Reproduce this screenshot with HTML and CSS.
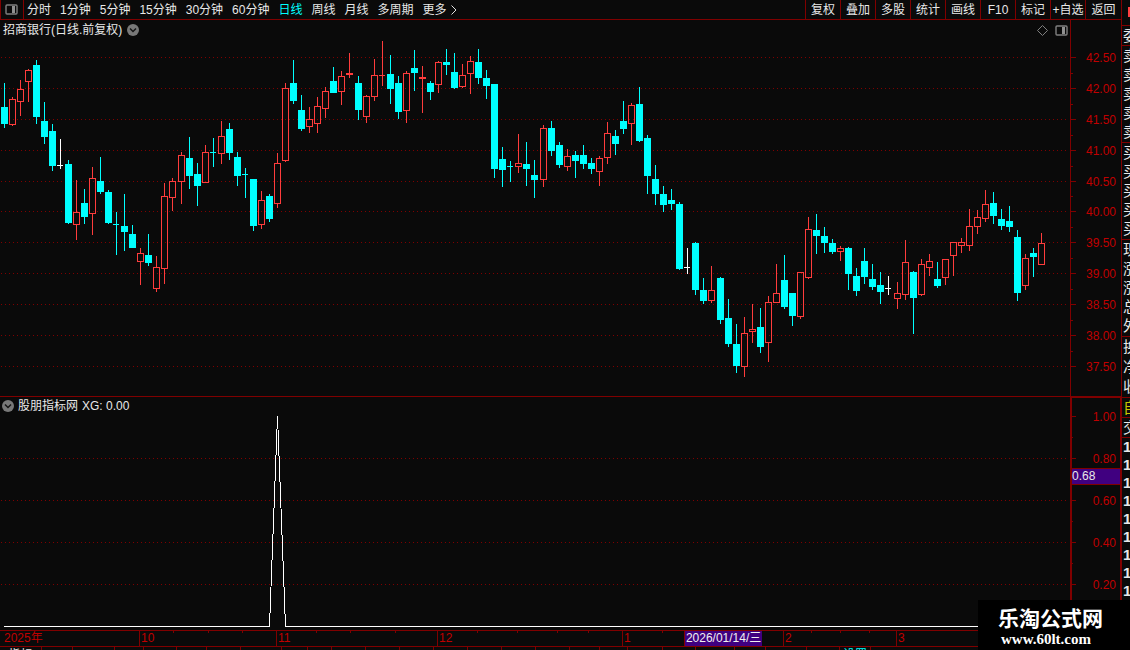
FILE: index.html
```html
<!DOCTYPE html>
<html lang="zh-CN">
<head>
    <meta charset="UTF-8">
    <meta name="viewport" content="width=device-width, initial-scale=1.0">
    <title>招商银行 日线</title>
    <link rel="stylesheet" href="styles.css">
</head>
<body>
    <div class="terminal">
        <main class="main">
            <header class="toolbar">
                <button class="layout-button" aria-label="布局">
                    <svg width="13" height="11" viewBox="0 0 13 11"><rect x="1" y="1" width="11" height="9" rx="1" fill="none" stroke="#808080" stroke-width="1.4"/><rect x="7" y="2" width="3" height="7" fill="#909090"/></svg>
                </button>
                <nav class="periods">
                    <button>分时</button>
                    <button>1分钟</button>
                    <button>5分钟</button>
                    <button>15分钟</button>
                    <button>30分钟</button>
                    <button>60分钟</button>
                    <button class="active">日线</button>
                    <button>周线</button>
                    <button>月线</button>
                    <button>多周期</button>
                    <button class="more">更多<svg width="6" height="10" viewBox="0 0 6 10"><path d="M0.5 0.5L5 5L0.5 9.5" fill="none" stroke="#e0e0e0"/></svg></button>
                </nav>
                <div class="tools">
                    <button>复权</button>
                    <button>叠加</button>
                    <button>多股</button>
                    <button>统计</button>
                    <button>画线</button>
                    <button>F10</button>
                    <button>标记</button>
                    <button>+自选</button>
                    <button class="back">返回</button>
                </div>
            </header>

            <section class="panel">
                <div class="plot">
                    <div class="panel-title">
                        <span>招商银行(日线.前复权)</span>
                        <svg width="12" height="12" viewBox="0 0 12 12"><circle cx="6" cy="6" r="6" fill="#787878"/><path d="M3 4.5L6 7.5L9 4.5" fill="none" stroke="#151515" stroke-width="1.5"/></svg>
                        <div class="panel-icons">
                            <svg width="11" height="11" viewBox="0 0 11 11"><path d="M5.5 0.5L10.5 5.5L5.5 10.5L0.5 5.5Z" fill="none" stroke="#808080"/></svg>
                            <svg width="13" height="11" viewBox="0 0 13 11"><rect x="1" y="1" width="11" height="9" rx="1" fill="none" stroke="#808080" stroke-width="1.4"/><rect x="7" y="2" width="3" height="7" fill="#909090"/></svg>
                        </div>
                    </div>
                    <svg id="kline" class="kline" viewBox="0 40 1070 356" preserveAspectRatio="none"></svg>
                </div>
                <svg id="price-axis" class="axis" width="50" height="376" viewBox="1071 20 50 376"></svg>
            </section>

            <section class="panel indicator">
                <div class="plot">
                    <div class="panel-title">
                        <svg width="12" height="12" viewBox="0 0 12 12"><circle cx="6" cy="6" r="6" fill="#787878"/><path d="M3 4.5L6 7.5L9 4.5" fill="none" stroke="#151515" stroke-width="1.5"/></svg>
                        <span>股朋指标网</span>
                        <span>XG: 0.00</span>
                    </div>
                    <svg id="signal" class="signal" viewBox="0 414 1070 216" preserveAspectRatio="none"></svg>
                </div>
                <div class="axis-frame">
                    <svg id="signal-axis" class="axis" width="48" height="232" viewBox="1072 398 48 232"></svg>
                    <div class="cursor-value">0.68</div>
                </div>
            </section>

            <div class="dates">
                <span>2025年</span>
                <span>10</span>
                <span>11</span>
                <span>12</span>
                <span>1</span>
                <span>2</span>
                <span>3</span>
                <svg id="date-ticks" class="date-ticks" viewBox="0 631 1121 15" preserveAspectRatio="none"></svg>
                <div class="cursor-date">2026/01/14/三</div>
            </div>
            <div id="tabs" class="tabs"></div>
        </main>

        <aside class="quote">
            <div class="quote-head"></div>
            <div class="group one"><b>委</b></div>
            <div class="group five"><b>卖</b><b>卖</b><b>卖</b><b>卖</b><b>卖</b></div>
            <div class="group five"><b>买</b><b>买</b><b>买</b><b>买</b><b>买</b></div>
            <div class="group five"><b>现</b><b>涨</b><b>涨</b><b>总</b><b>外</b></div>
            <div class="group three"><b>换</b><b>净</b><b>收</b></div>
            <div class="group one own"><b>自</b></div>
            <div class="group one"><b>交</b></div>
            <div class="group ticks"><b>1</b><b>1</b><b>1</b><b>1</b><b>1</b><b>1</b><b>1</b><b>1</b><b>1</b></div>
        </aside>
    </div>

    <div class="site-mark">
        <strong>乐淘公式网</strong>
        <span>www.60lt.com</span>
    </div>

    <script src="script.js"></script>
</body>
</html>
```
FILE: styles.css
```css
body {
    margin: 0;
    background-color: #0a0a0a;
    color: #e8e8e8;
    font-family: "Liberation Sans", "Noto Sans CJK SC", sans-serif;
    font-size: 12px;
    line-height: 16px;
    overflow: hidden;
}
svg {
    display: block;
    flex-shrink: 0;
}
button {
    padding: 0;
    border: 0;
    background: none;
    color: inherit;
    font: inherit;
    white-space: nowrap;
    cursor: pointer;
}
.terminal {
    display: flex;
    height: 100vh;
}
.main {
    flex: 1;
    min-width: 0;
    display: flex;
    flex-direction: column;
}

/* 顶部工具栏 */
.toolbar {
    display: flex;
    height: 19px;
    border-bottom: 1px solid #800000;
}
.layout-button {
    width: 24px;
    padding-left: 4px;
    border-left: 1px solid #800000;
    border-right: 1px solid #800000;
    box-sizing: border-box;
}
.periods {
    display: flex;
    gap: 9px;
    padding-left: 3px;
}
.periods .active {
    color: #00ffff;
}
.more {
    display: flex;
    align-items: center;
    gap: 4px;
}
.tools {
    display: flex;
    margin-left: auto;
}
.tools button {
    width: 35px;
    border-left: 1px solid #800000;
    box-sizing: border-box;
}
.tools .back {
    width: 36px;
}

/* 图表 */
.panel {
    display: flex;
}
.plot {
    flex: 1;
    min-width: 0;
    border-right: 1px solid #800000;
}
.panel-title {
    display: flex;
    align-items: center;
    gap: 5px;
    height: 20px;
    padding: 0 2px 0 3px;
}
.panel-icons {
    display: flex;
    gap: 7px;
    margin-left: auto;
}
.kline {
    width: 100%;
    height: 356px;
}
.indicator {
    border-top: 1px solid #800000;
}
.indicator .plot {
    border-right-width: 2px;
}
.indicator .panel-title {
    gap: 4px;
    height: 17px;
    padding: 0 2px;
}
.signal {
    width: 100%;
    height: 216px;
}
.signal polyline {
    shape-rendering: crispEdges;
}
.axis-frame {
    position: relative;
    border-top: 1px solid #800000;
    border-right: 1px solid #800000;
}
.axis text {
    fill: #c00000;
    text-anchor: end;
}
.cursor-value {
    position: absolute;
    top: 70px;
    left: 0;
    right: 0;
    height: 15px;
    line-height: 15px;
    border-top: 1px solid #800000;
    border-bottom: 1px solid #800000;
    background-color: #400080;
}

/* 日期轴 */
.dates {
    position: relative;
    display: grid;
    grid-template-columns: 139fr 137fr 161fr 185fr 161fr 113fr 225fr;
    height: 15px;
    line-height: 15px;
    border-top: 1px solid #800000;
    color: #c00000;
}
.dates span {
    padding-left: 1px;
    border-left: 1px solid #800000;
}
.dates span:first-child {
    padding-left: 4px;
    border-left: 0;
}
.date-ticks {
    position: absolute;
    width: 100%;
    height: 15px;
}
.cursor-date {
    position: absolute;
    right: 32%;
    height: 15px;
    padding: 0 1px;
    border-left: 1px solid #800000;
    background-color: #400080;
    color: #f0f0f0;
}
.tabs {
    display: flex;
    flex: 1;
    min-height: 0;
    overflow: hidden;
    border-top: 1px solid #800000;
}
.tabs button {
    flex-shrink: 0;
    height: 16px;
    border-right: 1px solid #800000;
    box-sizing: border-box;
}
.tabs .active {
    color: #00ffff;
}

/* 右侧报价栏 */
.quote {
    width: 8px;
    overflow: hidden;
    border-left: 1px solid #800000;
}
.quote-head {
    width: 2px;
    height: 10px;
    margin: 7px 0 8px 6px;
    background-color: #ff4040;
}
.group {
    display: flex;
    flex-direction: column;
    justify-content: space-around;
    padding-left: 1px;
    border-top: 1px solid #800000;
    font-size: 15px;
}
.group b {
    font-weight: normal;
}
.one {
    height: 19px;
}
.five {
    height: 96px;
}
.three {
    height: 60px;
}
.own {
    color: #c8c800;
}
.ticks {
    height: 162px;
}
.ticks b {
    font-weight: bold;
}

.site-mark {
    position: fixed;
    right: 0;
    bottom: 0;
    display: flex;
    flex-direction: column;
    width: 132px;
    height: 43px;
    padding: 7px 0 0 20px;
    background-color: #000;
    color: #fff;
}
.site-mark strong {
    font-size: 21px;
    line-height: 24px;
}
.site-mark span {
    padding-left: 3px;
    font-family: "Liberation Serif", serif;
    font-size: 15px;
    font-weight: bold;
}
```
FILE: script.js
```js
// x, 最高, 实体上沿, 实体下沿, 最低, 类型 (d 跌, u 涨, w 平)
const candles = [
    [4, 83, 107, 124, 128, 'd'], [12, 97, 99, 125, 126, 'u'], [20, 80, 89, 102, 116, 'u'],
    [28, 69, 70, 82, 102, 'u'], [36, 60, 65, 117, 124, 'd'], [44, 102, 121, 137, 144, 'd'],
    [52, 124, 131, 166, 171, 'd'], [60, 139, 165, 166, 169, 'w'], [68, 160, 164, 223, 224, 'd'],
    [76, 180, 212, 225, 240, 'u'], [84, 189, 203, 217, 224, 'd'], [92, 167, 178, 214, 235, 'u'],
    [100, 157, 181, 192, 194, 'd'], [108, 190, 192, 223, 224, 'd'], [116, 212, 224, 225, 255, 'd'],
    [124, 194, 226, 232, 251, 'd'], [132, 225, 234, 248, 248, 'd'], [140, 248, 253, 262, 285, 'u'],
    [148, 234, 255, 263, 266, 'd'], [156, 256, 267, 289, 292, 'u'], [164, 183, 196, 269, 284, 'u'],
    [172, 178, 181, 198, 211, 'u'], [181, 152, 155, 182, 204, 'u'], [189, 137, 158, 176, 189, 'd'],
    [197, 163, 174, 186, 206, 'd'], [205, 145, 152, 183, 183, 'u'], [213, 138, 152, 153, 167, 'd'],
    [221, 121, 136, 154, 164, 'u'], [229, 123, 129, 153, 160, 'd'], [237, 152, 157, 176, 186, 'd'],
    [245, 168, 174, 175, 198, 'd'], [253, 179, 179, 226, 231, 'd'], [261, 191, 200, 225, 229, 'u'],
    [269, 194, 196, 219, 222, 'd'], [277, 153, 163, 204, 208, 'u'], [285, 83, 88, 161, 162, 'u'],
    [293, 60, 83, 101, 104, 'd'], [301, 95, 110, 129, 131, 'd'], [309, 107, 119, 127, 133, 'u'],
    [317, 97, 106, 124, 133, 'u'], [325, 87, 91, 109, 118, 'u'], [333, 67, 81, 93, 93, 'd'],
    [341, 71, 76, 92, 105, 'u'], [349, 53, 73, 75, 78, 'u'], [358, 76, 83, 110, 120, 'd'],
    [366, 95, 96, 117, 123, 'u'], [374, 59, 75, 97, 101, 'u'], [382, 41, 75, 76, 86, 'u'],
    [390, 55, 74, 89, 104, 'd'], [398, 76, 83, 112, 119, 'd'], [406, 71, 73, 111, 123, 'u'],
    [414, 50, 68, 73, 91, 'd'], [422, 66, 77, 79, 113, 'u'], [430, 81, 83, 92, 100, 'd'],
    [438, 61, 62, 85, 93, 'u'], [446, 49, 62, 65, 75, 'd'], [454, 53, 72, 88, 89, 'd'],
    [462, 64, 75, 87, 88, 'u'], [470, 56, 61, 74, 94, 'u'], [478, 49, 62, 78, 84, 'd'],
    [486, 70, 78, 86, 99, 'd'], [494, 84, 84, 169, 178, 'd'], [502, 147, 159, 170, 187, 'd'],
    [510, 161, 166, 167, 182, 'd'], [518, 134, 163, 167, 173, 'u'], [526, 142, 164, 169, 186, 'd'],
    [534, 160, 175, 180, 198, 'd'], [543, 125, 128, 180, 187, 'u'], [551, 121, 128, 151, 156, 'd'],
    [559, 142, 145, 165, 168, 'd'], [567, 149, 156, 167, 171, 'u'], [575, 151, 155, 161, 178, 'd'],
    [583, 145, 155, 164, 169, 'd'], [591, 158, 163, 169, 174, 'd'], [599, 156, 158, 172, 186, 'u'],
    [607, 122, 133, 158, 164, 'u'], [615, 130, 136, 144, 155, 'd'], [623, 101, 121, 129, 134, 'd'],
    [631, 103, 105, 124, 145, 'u'], [639, 87, 104, 141, 142, 'd'], [647, 135, 138, 176, 194, 'd'],
    [655, 165, 179, 194, 205, 'd'], [663, 186, 194, 205, 212, 'd'], [671, 189, 200, 204, 210, 'd'],
    [679, 202, 204, 269, 270, 'd'], [687, 248, 267, 268, 274, 'w'], [695, 242, 243, 290, 295, 'd'],
    [703, 278, 290, 301, 304, 'd'], [711, 266, 290, 301, 303, 'u'], [720, 277, 278, 320, 324, 'd'],
    [728, 299, 318, 344, 347, 'd'], [736, 324, 344, 366, 373, 'd'], [744, 317, 333, 367, 377, 'u'],
    [752, 304, 329, 332, 343, 'u'], [760, 308, 327, 347, 353, 'd'], [768, 296, 302, 343, 362, 'u'],
    [776, 264, 293, 303, 303, 'u'], [784, 255, 280, 307, 309, 'd'], [792, 293, 293, 316, 326, 'd'],
    [800, 272, 272, 317, 319, 'u'], [808, 217, 229, 278, 279, 'u'], [816, 214, 230, 236, 254, 'd'],
    [824, 227, 236, 243, 253, 'd'], [832, 239, 243, 252, 254, 'd'], [840, 246, 248, 252, 261, 'u'],
    [848, 247, 248, 274, 290, 'd'], [856, 268, 276, 291, 296, 'd'], [864, 248, 261, 277, 284, 'd'],
    [872, 264, 279, 287, 290, 'd'], [880, 272, 285, 292, 304, 'd'], [888, 276, 288, 289, 295, 'w'],
    [897, 282, 293, 299, 309, 'u'], [905, 240, 262, 295, 300, 'u'], [913, 271, 272, 298, 334, 'd'],
    [921, 259, 264, 295, 296, 'u'], [929, 254, 261, 268, 276, 'u'], [937, 262, 279, 286, 288, 'd'],
    [945, 259, 259, 278, 285, 'u'], [953, 242, 242, 256, 276, 'u'], [961, 238, 242, 246, 253, 'u'],
    [969, 209, 226, 246, 251, 'u'], [977, 210, 217, 227, 234, 'u'], [985, 190, 204, 219, 222, 'u'],
    [993, 192, 203, 216, 224, 'd'], [1001, 209, 219, 226, 230, 'd'], [1009, 206, 221, 227, 232, 'd'],
    [1017, 230, 237, 293, 301, 'd'], [1025, 254, 258, 286, 290, 'u'], [1033, 248, 253, 257, 277, 'd'],
    [1041, 233, 243, 265, 265, 'u']
];
const colors = { d: '#00ffff', u: '#ff3c3c', w: '#ffffff' };

const priceRows = [57, 88, 119, 150, 181, 211, 242, 273, 304, 335, 366];
const signalRows = [416, 458, 500, 542, 584];

function rect(x, y, w, h, fill) {
    return `<rect x="${x}" y="${y}" width="${w}" height="${h}" fill="${fill}"/>`;
}

function gridLine(y) {
    return `<line x1="1" x2="1068" y1="${y + 0.5}" y2="${y + 0.5}" stroke="#800000" stroke-dasharray="1 3"/>`;
}

function drawKline() {
    let out = priceRows.map(gridLine).join('');
    candles.forEach(([x, high, top, bottom, low, type]) => {
        const color = colors[type];
        out += rect(x, high, 1, top - high, color);
        out += rect(x, bottom, 1, low - bottom, color);
        if (bottom - top === 1) {
            out += rect(x - 3, top, 6, 1, color);
        } else if (type === 'u') {
            out += `<rect x="${x - 2.5}" y="${top + 0.5}" width="6" height="${bottom - top - 1}" fill="none" stroke="${color}"/>`;
        } else {
            out += rect(x - 3, top, 7, bottom - top, color);
        }
    });
    document.getElementById('kline').innerHTML = out;
}

function drawSignal() {
    document.getElementById('signal').innerHTML = signalRows.slice(1).map(gridLine).join('') +
        '<polyline points="4,626.5 269.5,626.5 277.5,416 285.5,626.5 1042,626.5" fill="none" stroke="#ffffff"/>';
}

function drawAxis(id, left, rows, minor, start, step) {
    let out = '';
    rows.forEach((y, i) => {
        out += rect(left, y, 1076 - left, 1, '#800000');
        out += `<text x="1116" y="${y + 5}">${(start - i * step).toFixed(2)}</text>`;
    });
    minor.forEach(y => {
        out += rect(left, y, 1073 - left, 1, '#800000');
    });
    document.getElementById(id).innerHTML = out;
}

// 底部标签, 每项为 [宽度, 文字]
const tabList = [
    [42, '指标'], [31], [42], [29], [33], [30], [34], [41], [26], [24], [34], [34], [34], [34], [34],
    [34], [34], [30], [28], [35], [33], [39], [31], [41], [33], [31, '设置']
];

function drawTabs() {
    const tabs = document.getElementById('tabs');
    tabList.forEach(([width, label], i) => {
        const tab = document.createElement('button');
        tab.style.width = width + 'px';
        tab.textContent = label || '';
        if (i === tabList.length - 1) {
            tab.className = 'active';
        }
        tabs.appendChild(tab);
    });
}

drawKline();
drawSignal();
drawAxis('price-axis', 1071, priceRows, [73, 104, 135, 166, 196, 227, 258, 289, 320, 351], 42.5, 0.5);
drawAxis('signal-axis', 1072, signalRows, [437, 521, 563], 1, 0.2);
document.getElementById('date-ticks').innerHTML =
    [173, 208, 242, 316, 350, 395, 477, 517, 557, 588, 662, 811, 840, 869]
        .map(x => rect(x, 631, 1, 2, '#800000')).join('');
drawTabs();
```
